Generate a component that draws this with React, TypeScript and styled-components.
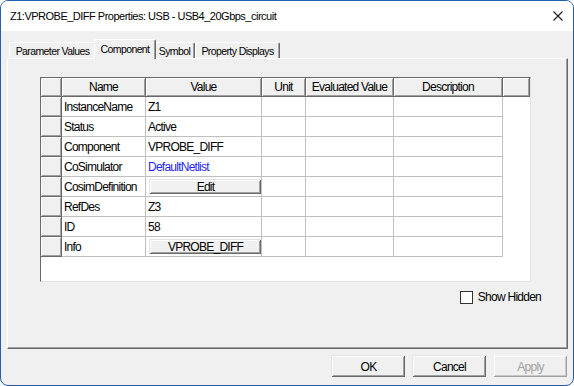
import styled, { createGlobalStyle } from "styled-components";

const GlobalStyle = createGlobalStyle`
  html, body {
    margin: 0;
    padding: 0;
    background: #ffffff;
  }
  body {
    font-family: "Liberation Sans", Arial, sans-serif;
    color: #000;
  }
  * {
    box-sizing: border-box;
  }
`;

interface IRow {
  name: string;
  value: string;
  kind?: "text" | "link" | "button";
}

const rows: IRow[] = [
  { name: "InstanceName", value: "Z1" },
  { name: "Status", value: "Active" },
  { name: "Component", value: "VPROBE_DIFF" },
  { name: "CoSimulator", value: "DefaultNetlist", kind: "link" },
  { name: "CosimDefinition", value: "Edit", kind: "button" },
  { name: "RefDes", value: "Z3" },
  { name: "ID", value: "58" },
  { name: "Info", value: "VPROBE_DIFF", kind: "button" },
];

const tabs = [
  { label: "Parameter Values", width: 87 },
  { label: "Component", width: 58 },
  { label: "Symbol", width: 41 },
  { label: "Property Displays", width: 85 },
];

const columns = ["", "Name", "Value", "Unit", "Evaluated Value", "Description", ""];
const COLS = "21px 84px 116px 44px 88px 109px";

const App = () => {
  return (
    <>
      <GlobalStyle />
      <Window>
        <TitleBar>
          <span>Z1:VPROBE_DIFF Properties: USB - USB4_20Gbps_circuit</span>
          <CloseBox>
            <svg width="10" height="10" viewBox="0 0 10 10">
              <path d="M0.5 0.5 L9.5 9.5 M9.5 0.5 L0.5 9.5" stroke="#1a1a1a" strokeWidth="1.1" />
            </svg>
          </CloseBox>
        </TitleBar>

        <Body>
          <TabStrip>
            {tabs.map((t) => (
              <Tab key={t.label} $w={t.width} $active={t.label === "Component"}>
                {t.label}
              </Tab>
            ))}
          </TabStrip>

          <Panel>
            <Grid>
              <HeaderRow>
                {columns.map((c, i) => (
                  <HeaderCell key={i}>{c}</HeaderCell>
                ))}
              </HeaderRow>
              {rows.map((r) => (
                <DataRow key={r.name}>
                  <RowHead />
                  <Cell>{r.name}</Cell>
                  {r.kind === "button" ? (
                    <ButtonCell>
                      <CellButton>{r.value}</CellButton>
                    </ButtonCell>
                  ) : (
                    <Cell $link={r.kind === "link"}>{r.value}</Cell>
                  )}
                  <Cell />
                  <Cell />
                  <Cell />
                </DataRow>
              ))}
            </Grid>

            <CheckRow>
              <CheckBox />
              <span>Show Hidden</span>
            </CheckRow>
          </Panel>

          <Footer>
            <DialogButton>OK</DialogButton>
            <DialogButton>Cancel</DialogButton>
            <DialogButton $disabled>Apply</DialogButton>
          </Footer>
        </Body>
      </Window>
    </>
  );
};

const Window = styled.div`
  width: 574px;
  height: 386px;
  border: 1px solid #2360b5;
  border-radius: 8px;
  overflow: hidden;
  background: #f0f0f0;
  display: flex;
  flex-direction: column;
`;

const TitleBar = styled.div`
  height: 30px;
  flex-shrink: 0;
  background: #ffffff;
  display: flex;
  align-items: center;
  justify-content: space-between;
  padding-left: 9px;
  font-size: 11px;
  letter-spacing: -0.5px;
  color: #000;
`;

const CloseBox = styled.div`
  display: flex;
  align-items: center;
  padding-right: 10px;
`;

const Body = styled.div`
  flex: 1;
  display: flex;
  flex-direction: column;
  padding: 8px 5px 0 6px;
`;

const TabStrip = styled.div`
  display: flex;
  align-items: flex-end;
  height: 20px;
  padding-left: 2px;
  margin-bottom: -1px;
  position: relative;
  z-index: 1;
`;

const Tab = styled.div<{ $w: number; $active?: boolean }>`
  width: ${(p) => (p.$active ? p.$w + 4 : p.$w)}px;
  height: ${(p) => (p.$active ? 20 : 16)}px;
  margin: ${(p) => (p.$active ? "0 -2px 0 -2px" : "0 0 1px 0")};
  position: relative;
  z-index: ${(p) => (p.$active ? 2 : 1)};
  background: #f0f0f0;
  border-top: 1px solid #ffffff;
  border-left: 1px solid #ffffff;
  border-right: 1px solid #696969;
  box-shadow: inset -1px 0 #a0a0a0;
  border-radius: 2px 2px 0 0;
  display: flex;
  align-items: center;
  justify-content: center;
  padding-bottom: ${(p) => (p.$active ? 2 : 0)}px;
  font-size: 10.5px;
  letter-spacing: -0.6px;
  white-space: nowrap;
`;

const Panel = styled.div`
  height: 291px;
  border-style: solid;
  border-width: 1px;
  border-color: #ffffff #696969 #696969 #ffffff;
  box-shadow: inset -1px -1px #a0a0a0;
  padding: 18px 0 0 32px;
  display: flex;
  flex-direction: column;
`;

const Grid = styled.div`
  width: 491px;
  height: 205px;
  background: #ffffff;
  border-style: solid;
  border-width: 1px;
  border-color: #696969 #e3e3e3 #e3e3e3 #696969;
`;

const HeaderRow = styled.div`
  display: grid;
  grid-template-columns: ${COLS} 27px;
  height: 19px;
`;

const HeaderCell = styled.div`
  background: #f0f0f0;
  border-right: 1px solid #696969;
  border-bottom: 1px solid #696969;
  box-shadow: inset 1px 1px #ffffff, inset -1px -1px #a0a0a0;
  display: flex;
  align-items: center;
  justify-content: center;
  font-size: 12px;
  letter-spacing: -0.75px;
  white-space: nowrap;
`;

const DataRow = styled.div`
  display: grid;
  grid-template-columns: ${COLS};
  height: 20px;
`;

const RowHead = styled.div`
  background: #f0f0f0;
  border-right: 1px solid #696969;
  border-bottom: 1px solid #696969;
  box-shadow: inset 1px 1px #ffffff, inset -1px -1px #a0a0a0;
`;

const Cell = styled.div<{ $link?: boolean }>`
  border-right: 1px solid #c0c0c0;
  border-bottom: 1px solid #c0c0c0;
  display: flex;
  align-items: center;
  padding-left: 2px;
  font-size: 12px;
  letter-spacing: -0.75px;
  color: ${(p) => (p.$link ? "#1f1fff" : "#000")};
  white-space: nowrap;
  overflow: hidden;
`;

const ButtonCell = styled.div`
  border-right: 1px solid #c0c0c0;
  border-bottom: 1px solid #c0c0c0;
  padding: 2px 0 2px 3px;
  display: flex;
`;

const CellButton = styled.div`
  flex: 1;
  background: #f0f0f0;
  box-shadow: inset -1px -1px #696969, inset 1px 1px #ffffff, inset -2px -2px #a0a0a0;
  border-top: 1px solid #e3e3e3;
  border-left: 1px solid #e3e3e3;
  display: flex;
  align-items: center;
  justify-content: center;
  font-size: 12px;
  letter-spacing: -0.75px;
`;

const CheckRow = styled.div`
  display: flex;
  justify-content: flex-end;
  align-items: center;
  gap: 5px;
  margin-top: 8px;
  padding-right: 26px;
  font-size: 12px;
  letter-spacing: -0.75px;
`;

const CheckBox = styled.div`
  width: 13px;
  height: 13px;
  border: 1px solid #333333;
  background: #ffffff;
`;

const Footer = styled.div`
  display: flex;
  justify-content: flex-end;
  gap: 7px;
  padding: 6px 1px 0 0;
`;

const DialogButton = styled.div<{ $disabled?: boolean }>`
  width: 74px;
  height: 22px;
  background: #f0f0f0;
  border-top: 1px solid ${(p) => (p.$disabled ? "#f0f0f0" : "#e3e3e3")};
  border-left: 1px solid ${(p) => (p.$disabled ? "#f0f0f0" : "#e3e3e3")};
  box-shadow: ${(p) =>
    p.$disabled
      ? "inset -1px -1px #a0a0a0, inset 1px 1px #ffffff, inset -2px -2px #c8c8c8"
      : "inset -1px -1px #696969, inset 1px 1px #ffffff, inset -2px -2px #a0a0a0"};
  display: flex;
  align-items: center;
  justify-content: center;
  font-size: 12px;
  letter-spacing: -0.75px;
  color: ${(p) => (p.$disabled ? "#a0a0a0" : "#000")};
`;

export default App;
